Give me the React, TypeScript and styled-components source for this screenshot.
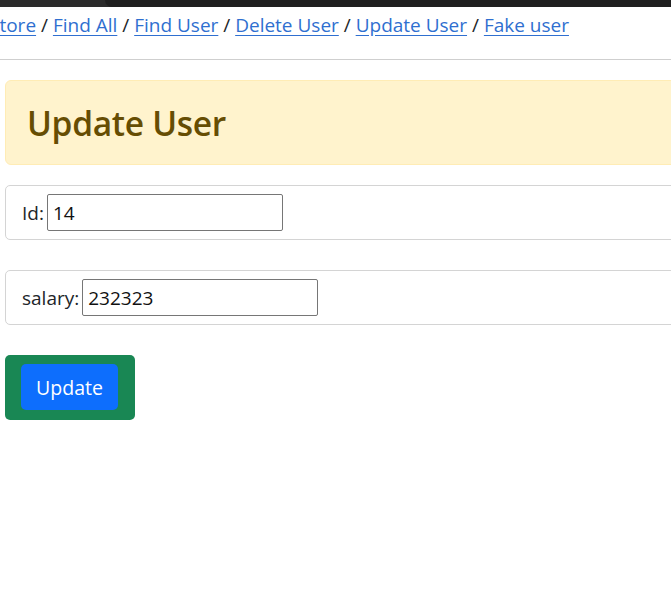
import React from "react";
import styled, { createGlobalStyle } from "styled-components";

const Global = createGlobalStyle`
  html, body { margin: 0; padding: 0; background: #fff; overflow: hidden; }
  body { font-family: "Open Sans", "Noto Sans", sans-serif; color: #212529; }
`;

const TopBar = styled.div`
  height: 7px;
  background: #2b2b2b;
  display: flex;
`;

const TopTab = styled.div`
  margin-left: 105px;
  flex: 1;
  background: #1f1f1f;
  border-bottom-left-radius: 8px;
`;

const Page = styled.div`
  width: 900px;
`;

const Nav = styled.nav`
  margin-left: -11px;
  padding-top: 5px;
  height: 47px;
  font-size: 19px;
  line-height: 26px;
  color: #212529;
  white-space: nowrap;
`;

const NavLink = styled.a`
  color: #2f6fd0;
  text-decoration: underline;
  text-underline-offset: 3px;
`;

const Rule = styled.hr`
  margin: 0;
  border: 0;
  border-top: 1px solid #cfcfcf;
`;

const Body = styled.div`
  padding: 20px 0 0 5px;
  display: flex;
  flex-direction: column;
  align-items: flex-start;
`;

const Alert = styled.div`
  box-sizing: border-box;
  align-self: stretch;
  height: 85px;
  background: #fff3cd;
  border: 1px solid #ffecb5;
  border-radius: 6px;
  padding: 0 21px;
  display: flex;
  align-items: center;
  margin-bottom: 20px;
`;

const Title = styled.h2`
  margin: 0;
  font-size: 33.5px;
  font-weight: 600;
  color: #664d03;
  letter-spacing: -0.3px;
`;

const Card = styled.div`
  box-sizing: border-box;
  align-self: stretch;
  height: 55px;
  border: 1px solid #d4d4d4;
  border-radius: 5px;
  padding: 0 16px;
  display: flex;
  align-items: center;
  margin-bottom: 30px;
  font-size: 19px;
`;

const Label = styled.label`
  margin-right: 3px;
  color: #212529;
`;

const Input = styled.input`
  box-sizing: border-box;
  width: 236px;
  height: 37px;
  border: 1px solid #767676;
  border-radius: 2px;
  padding: 0 5px;
  font-family: inherit;
  font-size: 19px;
  color: #111;
  outline: none;
`;

const ButtonWrap = styled.div`
  box-sizing: border-box;
  width: 130px;
  height: 65px;
  background: #198754;
  border-radius: 5px;
  padding: 9px 0 0 16px;
`;

const Button = styled.button`
  box-sizing: border-box;
  width: 97px;
  height: 46px;
  background: #0d6efd;
  color: #fff;
  border: 0;
  border-radius: 5px;
  font-family: inherit;
  font-size: 19.5px;
  cursor: pointer;
`;

const links = ["Store", "Find All", "Find User", "Delete User", "Update User", "Fake user"];

export default function App() {
  return (
    <>
      <Global />
      <TopBar>
        <TopTab />
      </TopBar>
      <Page>
        <Nav>
          {links.map((l, i) => (
            <React.Fragment key={l}>
              {i > 0 && " / "}
              <NavLink href="#">{l}</NavLink>
            </React.Fragment>
          ))}
        </Nav>
        <Rule />
        <Body>
          <Alert>
            <Title>Update User</Title>
          </Alert>
          <Card>
            <Label>Id:</Label>
            <Input defaultValue="14" />
          </Card>
          <Card>
            <Label>salary:</Label>
            <Input defaultValue="232323" />
          </Card>
          <ButtonWrap>
            <Button>Update</Button>
          </ButtonWrap>
        </Body>
      </Page>
    </>
  );
}
